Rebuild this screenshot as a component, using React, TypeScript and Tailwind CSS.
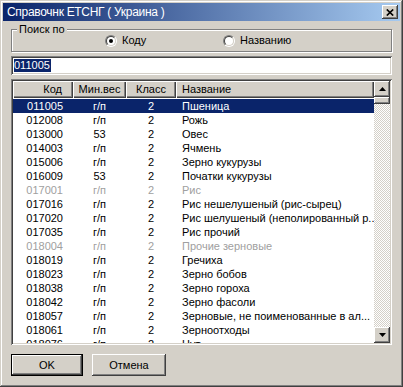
import React from "react";

const raised =
  "shadow-[inset_-1px_-1px_#404040,inset_1px_1px_#ffffff,inset_-2px_-2px_#808080,inset_2px_2px_#d4d0c8]";
const sunken =
  "shadow-[inset_1px_1px_#808080,inset_-1px_-1px_#ffffff,inset_2px_2px_#404040,inset_-2px_-2px_#d4d0c8]";

type Row = { code: string; w: string; k: string; name: string; gray?: boolean };

const rows: Row[] = [
  { code: "011005", w: "г/п", k: "2", name: "Пшеница" },
  { code: "012008", w: "г/п", k: "2", name: "Рожь" },
  { code: "013000", w: "53", k: "2", name: "Овес" },
  { code: "014003", w: "г/п", k: "2", name: "Ячмень" },
  { code: "015006", w: "г/п", k: "2", name: "Зерно кукурузы" },
  { code: "016009", w: "53", k: "2", name: "Початки кукурузы" },
  { code: "017001", w: "г/п", k: "2", name: "Рис", gray: true },
  { code: "017016", w: "г/п", k: "2", name: "Рис нешелушеный (рис-сырец)" },
  { code: "017020", w: "г/п", k: "2", name: "Рис шелушеный (неполированный р..." },
  { code: "017035", w: "г/п", k: "2", name: "Рис прочий" },
  { code: "018004", w: "г/п", k: "2", name: "Прочие зерновые", gray: true },
  { code: "018019", w: "г/п", k: "2", name: "Гречиха" },
  { code: "018023", w: "г/п", k: "2", name: "Зерно бобов" },
  { code: "018038", w: "г/п", k: "2", name: "Зерно гороха" },
  { code: "018042", w: "г/п", k: "2", name: "Зерно фасоли" },
  { code: "018057", w: "г/п", k: "2", name: "Зерновые, не поименованные в ал..." },
  { code: "018061", w: "г/п", k: "2", name: "Зерноотходы" },
  { code: "018076", w: "г/п", k: "2", name: "Нут" },
];

function Radio({ checked, label }: { checked?: boolean; label: string }) {
  return (
    <div className="flex items-center w-[118px]">
      <div className="w-[12px] h-[12px] rounded-full border border-t-[#808080] border-l-[#808080] border-r-white border-b-white">
        <div className="w-full h-full rounded-full border border-t-[#404040] border-l-[#404040] border-r-[#d4d0c8] border-b-[#d4d0c8] bg-white flex items-center justify-center">
          {checked && <div className="w-[4px] h-[4px] rounded-full bg-black" />}
        </div>
      </div>
      <span className="ml-[5px]">{label}</span>
    </div>
  );
}

function Arrow({ up }: { up?: boolean }) {
  return (
    <svg width="7" height="4" viewBox="0 0 7 4">
      {up ? <polygon points="3.5,0 7,4 0,4" fill="#000" /> : <polygon points="0,0 7,0 3.5,4" fill="#000" />}
    </svg>
  );
}

export default function App() {
  return (
    <div
      className={`w-[403px] h-[387px] bg-[#d4d0c8] p-[3px] flex flex-col text-[11px] text-black font-['Liberation_Sans',Arial,sans-serif] shadow-[inset_-1px_-1px_#404040,inset_1px_1px_#d4d0c8,inset_-2px_-2px_#808080,inset_2px_2px_#ffffff]`}
    >
      {/* Title bar */}
      <div className="h-[18px] flex items-center justify-between pl-[4px] pr-[2px] bg-[linear-gradient(to_right,#0a246a,#a6caf0)]">
        <span className="text-white text-[12px] leading-[18px] tracking-[-0.3px]">Справочнк ЕТСНГ ( Украина )</span>
        <div className={`w-[16px] h-[14px] bg-[#d4d0c8] flex items-center justify-center ${raised}`}>
          <svg width="8" height="7" viewBox="0 0 8 7">
            <path d="M0.8 0.5L7.2 6.5M7.2 0.5L0.8 6.5" stroke="#000" strokeWidth="1.7" />
          </svg>
        </div>
      </div>

      {/* Body */}
      <div className="flex-1 flex flex-col px-[8px]">
        {/* Group box */}
        <div className="relative mt-[8px] h-[23px] border border-[#808080] shadow-[1px_1px_0_#ffffff,inset_1px_1px_0_#ffffff] flex items-center pl-[93px]">
          <span className="absolute -top-[8px] left-[5px] px-[2px] bg-[#d4d0c8] leading-[14px]">Поиск по</span>
          <Radio checked label="Коду" />
          <Radio label="Названию" />
        </div>

        {/* Edit */}
        <div className={`mt-[4px] h-[19px] bg-white p-[3px] flex items-center ${sunken}`}>
          <span className="bg-[#0a246a] text-white leading-[13px] pr-[1px]">011005</span>
        </div>

        {/* List */}
        <div className={`mt-[4px] h-[266px] bg-white p-[2px] flex ${sunken}`}>
          <div className="flex-1 overflow-hidden flex flex-col">
            <div className="h-[17px] flex shrink-0 bg-[#d4d0c8]">
              <div className="w-[60px] text-right pr-[11px] leading-[17px] shadow-[inset_1px_1px_#ffffff,inset_-1px_-1px_#404040,inset_-2px_-2px_#808080]">Код</div>
              <div className="w-[53px] text-center leading-[17px] shadow-[inset_1px_1px_#ffffff,inset_-1px_-1px_#404040,inset_-2px_-2px_#808080]">Мин.вес</div>
              <div className="w-[50px] text-center leading-[17px] shadow-[inset_1px_1px_#ffffff,inset_-1px_-1px_#404040,inset_-2px_-2px_#808080]">Класс</div>
              <div className="flex-1 pl-[6px] leading-[17px] shadow-[inset_1px_1px_#ffffff,inset_-1px_-1px_#404040,inset_-2px_-2px_#808080]">Название</div>
            </div>
            <div className="flex-1 overflow-hidden pt-[1px]">
              {rows.map((r, i) => {
                const sel = i === 0;
                const color = sel ? "bg-[#0a246a] text-white" : r.gray ? "text-[#a0a0a0]" : "text-black";
                return (
                  <div key={r.code} className={`h-[14px] flex leading-[14px] whitespace-nowrap ${color}`}>
                    <div className="w-[60px] text-right pr-[10px]">{r.code}</div>
                    <div className="w-[53px] text-center">{r.w}</div>
                    <div className="w-[50px] text-center">{r.k}</div>
                    <div className="flex-1 pl-[6px] overflow-hidden">{r.name}</div>
                  </div>
                );
              })}
            </div>
          </div>
          {/* Scrollbar */}
          <div className="w-[16px] flex flex-col">
            <div className={`h-[16px] bg-[#d4d0c8] flex items-center justify-center ${raised}`}>
              <Arrow up />
            </div>
            <div className={`h-[7px] bg-[#d4d0c8] ${raised}`} />
            <div className="flex-1 bg-[repeating-conic-gradient(#ffffff_0_25%,#d4d0c8_0_50%)] bg-[length:2px_2px]" />
            <div className={`h-[16px] bg-[#d4d0c8] flex items-center justify-center ${raised}`}>
              <Arrow />
            </div>
          </div>
        </div>

        {/* Buttons */}
        <div className="mt-[9px] flex">
          <div className="w-[72px] h-[22px] border border-black">
            <div className={`w-full h-full bg-[#d4d0c8] flex items-center justify-center ${raised}`}>OK</div>
          </div>
          <div className={`ml-[9px] w-[74px] h-[22px] bg-[#d4d0c8] flex items-center justify-center ${raised}`}>
            Отмена
          </div>
        </div>
      </div>
    </div>
  );
}
